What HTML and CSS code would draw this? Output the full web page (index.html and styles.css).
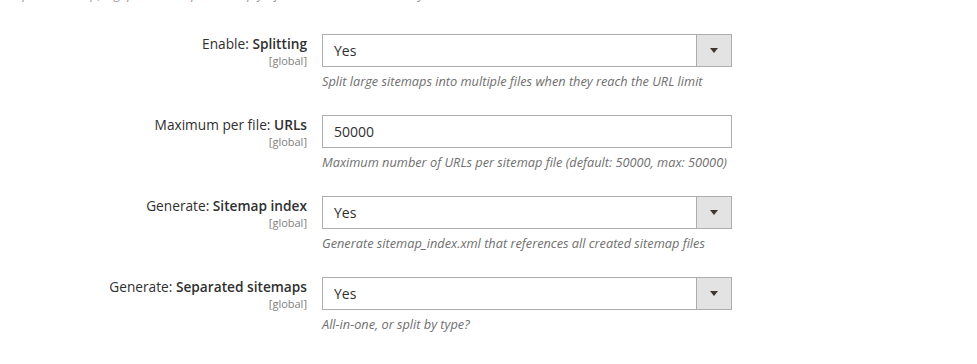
FILE: index.html
```html
<!DOCTYPE html>
<html lang="en">
<head>
    <meta charset="UTF-8">
    <meta name="viewport" content="width=device-width, initial-scale=1.0">
    <title>Sitemap settings</title>
    <link rel="stylesheet" href="styles.css">
</head>
<body>
  <p class="top-note">yourpath/sitemap, e.g. pub/sitemaps/ or simply / for the store root directory</p>

  <div class="fieldset">
    <div class="field">
      <div class="label">
        <span>Enable: <strong>Splitting</strong></span>
        <span class="scope">[global]</span>
      </div>
      <div class="control">
        <div class="select">
          <span class="value">Yes</span>
          <span class="arrow"></span>
        </div>
        <p class="note">Split large sitemaps into multiple files when they reach the URL limit</p>
      </div>
    </div>

    <div class="field">
      <div class="label">
        <span>Maximum per file: <strong>URLs</strong></span>
        <span class="scope">[global]</span>
      </div>
      <div class="control">
        <input type="text" class="input-text" value="50000">
        <p class="note">Maximum number of URLs per sitemap file (default: 50000, max: 50000)</p>
      </div>
    </div>

    <div class="field">
      <div class="label">
        <span>Generate: <strong>Sitemap index</strong></span>
        <span class="scope">[global]</span>
      </div>
      <div class="control">
        <div class="select">
          <span class="value">Yes</span>
          <span class="arrow"></span>
        </div>
        <p class="note">Generate sitemap_index.xml that references all created sitemap files</p>
      </div>
    </div>

    <div class="field">
      <div class="label">
        <span>Generate: <strong>Separated sitemaps</strong></span>
        <span class="scope">[global]</span>
      </div>
      <div class="control">
        <div class="select">
          <span class="value">Yes</span>
          <span class="arrow"></span>
        </div>
        <p class="note">All-in-one, or split by type?</p>
      </div>
    </div>
  </div>
</body>
</html>
```

FILE: styles.css
```css
body {
  margin: 0;
  background: #fff;
  font-family: "Open Sans", "Liberation Sans", sans-serif;
  color: #303030;
  overflow: hidden;
}

.top-note {
  margin: -15px 0 0 -3px;
  font-size: 12.75px;
  line-height: 18px;
  font-style: italic;
  color: #999;
  white-space: nowrap;
}

.fieldset {
  padding-top: 31px;
}

.field {
  display: grid;
  grid-template-columns: 307px 410px;
  column-gap: 15px;
  margin-bottom: 25px;
}

.label {
  display: flex;
  flex-direction: column;
  align-items: flex-end;
  text-align: right;
  font-size: 13.7px;
  line-height: 19px;
}

.label strong {
  font-weight: 600;
}

.scope {
  font-size: 11px;
  line-height: 15px;
  color: #808080;
}

.select,
.input-text {
  box-sizing: border-box;
  height: 33px;
  width: 410px;
  border: 1px solid #adadad;
  background: #fff;
  font-family: inherit;
  font-size: 14px;
  color: #303030;
}

.select {
  display: flex;
  align-items: center;
}

.value {
  flex: 1;
  padding-left: 11px;
}

.arrow {
  align-self: stretch;
  width: 34px;
  background: #e3e3e3;
  border-left: 1px solid #adadad;
  position: relative;
}

.arrow::after {
  content: "";
  position: absolute;
  left: 13px;
  top: 13px;
  border-left: 4px solid transparent;
  border-right: 4px solid transparent;
  border-top: 5px solid #41362f;
}

.input-text {
  display: block;
  padding: 0 11px;
  outline: none;
}

.note {
  margin: 5px 0 0;
  font-size: 12.75px;
  line-height: 18px;
  font-style: italic;
  color: #6f6f6f;
  white-space: nowrap;
}
```
